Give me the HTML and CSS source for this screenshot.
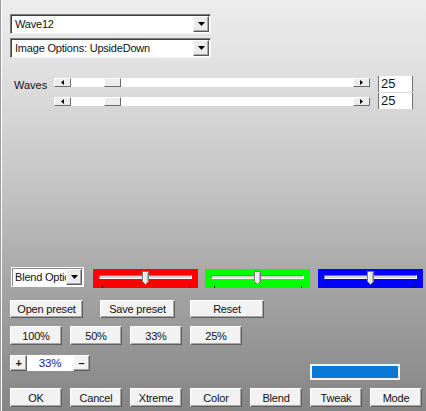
FILE: index.html
```html
<!DOCTYPE html>
<html>
<head>
<meta charset="utf-8">
<link rel="stylesheet" href="styles.css">
</head>
<body>
<div class="win">
  <div class="combo wide">
    <span class="val">Wave12</span>
    <span class="dd"><svg width="7" height="4" viewBox="0 0 7 4"><path d="M0 0H7L3.5 4Z" fill="#000"/></svg></span>
  </div>
  <div class="combo wide second">
    <span class="val">Image Options: UpsideDown</span>
    <span class="dd"><svg width="7" height="4" viewBox="0 0 7 4"><path d="M0 0H7L3.5 4Z" fill="#000"/></svg></span>
  </div>

  <div class="waves">
    <span class="lbl">Waves</span>
    <div class="sb first">
      <span class="arr"><svg width="3" height="5" viewBox="0 0 3 5"><path d="M3 0V5L0 2.5Z" fill="#000"/></svg></span>
      <span class="trk pre"></span>
      <span class="thumb"></span>
      <span class="trk rest"></span>
      <span class="arr"><svg width="3" height="5" viewBox="0 0 3 5"><path d="M0 0V5L3 2.5Z" fill="#000"/></svg></span>
    </div>
    <div class="edit">25</div>
    <span></span>
    <div class="sb second">
      <span class="arr"><svg width="3" height="5" viewBox="0 0 3 5"><path d="M3 0V5L0 2.5Z" fill="#000"/></svg></span>
      <span class="trk pre"></span>
      <span class="thumb"></span>
      <span class="trk rest"></span>
      <span class="arr"><svg width="3" height="5" viewBox="0 0 3 5"><path d="M0 0V5L3 2.5Z" fill="#000"/></svg></span>
    </div>
    <div class="edit">25</div>
  </div>

  <div class="fill"></div>

  <div class="colors">
    <div class="combo blend">
      <span class="val">Blend Options</span>
      <span class="dd"><svg width="7" height="4" viewBox="0 0 7 4"><path d="M0 0H7L3.5 4Z" fill="#000"/></svg></span>
    </div>
    <div class="chan red">
      <span class="groove"></span>
      <svg class="knob" width="8" height="14" viewBox="0 0 8 14"><path d="M0.5 0.5H6.5V10.5L3.5 13.5L0.5 10.5Z" fill="#e8e8e8" stroke="#7a7a7a"/><path d="M1.5 1.5V10.5" stroke="#fff"/><path d="M5.5 1.5V10.5" stroke="#b0b0b0"/></svg>
      <span class="tick t1"></span><span class="tick t2"></span>
    </div>
    <div class="chan green">
      <span class="groove"></span>
      <svg class="knob" width="8" height="14" viewBox="0 0 8 14"><path d="M0.5 0.5H6.5V10.5L3.5 13.5L0.5 10.5Z" fill="#e8e8e8" stroke="#7a7a7a"/><path d="M1.5 1.5V10.5" stroke="#fff"/><path d="M5.5 1.5V10.5" stroke="#b0b0b0"/></svg>
      <span class="tick t1"></span><span class="tick t2"></span>
    </div>
    <div class="chan blue">
      <span class="groove"></span>
      <svg class="knob" width="8" height="14" viewBox="0 0 8 14"><path d="M0.5 0.5H6.5V10.5L3.5 13.5L0.5 10.5Z" fill="#e8e8e8" stroke="#7a7a7a"/><path d="M1.5 1.5V10.5" stroke="#fff"/><path d="M5.5 1.5V10.5" stroke="#b0b0b0"/></svg>
      <span class="tick t1"></span><span class="tick t2"></span>
    </div>
  </div>

  <div class="row presets">
    <button class="btn w73">Open preset</button>
    <button class="btn w75">Save preset</button>
    <button class="btn w74">Reset</button>
  </div>

  <div class="row pct">
    <button class="btn">100%</button>
    <button class="btn">50%</button>
    <button class="btn">33%</button>
    <button class="btn">25%</button>
  </div>

  <div class="zoomrow">
    <button class="btn small">+</button>
    <span class="zval">33%</span>
    <button class="btn small">–</button>
    <span class="swatch"></span>
  </div>

  <div class="row bottom">
    <button class="btn">OK</button>
    <button class="btn">Cancel</button>
    <button class="btn">Xtreme</button>
    <button class="btn">Color</button>
    <button class="btn">Blend</button>
    <button class="btn">Tweak</button>
    <button class="btn">Mode</button>
  </div>
</div>
</body>
</html>
```

FILE: styles.css
```css
html, body {
  margin: 0;
  padding: 0;
}
body {
  width: 426px;
  height: 411px;
  overflow: hidden;
  background: linear-gradient(#ececec 0%, #e2e2e2 15%, #c4c4c4 45%, #a4a4a4 70%, #858585 100%);
  font-family: "Liberation Sans", Arial, sans-serif;
  font-size: 11px;
  letter-spacing: -0.2px;
  color: #111;
}
.win {
  height: 411px;
  box-sizing: border-box;
  border-left: 1px solid #9a9a9a;
  box-shadow: inset 1px 0 0 #ffffff;
  padding: 14px 0 4px 9px;
  display: flex;
  flex-direction: column;
}

/* combo boxes */
.combo {
  box-sizing: border-box;
  height: 20px;
  background: #fff;
  border: 1px solid;
  border-color: #7a7a7a #f4f4f4 #f4f4f4 #7a7a7a;
  box-shadow: inset 1px 1px 0 #404040;
  display: flex;
  align-items: center;
  padding: 1px 1px 1px 2px;
  flex: none;
}
.combo.wide { width: 201px; }
.combo.second { margin-top: 4px; }
.combo .val {
  flex: 1;
  min-width: 0;
  overflow: hidden;
  white-space: nowrap;
  padding-left: 2px;
  line-height: 16px;
  font-size: 11px;
}
.dd {
  box-sizing: border-box;
  width: 16px;
  height: 16px;
  flex: none;
  background: #ececec;
  border: 1px solid;
  border-color: #ffffff #5a5a5a #5a5a5a #ffffff;
  box-shadow: inset -1px -1px 0 #a8a8a8;
  display: flex;
  align-items: center;
  justify-content: center;
}

/* waves */
.waves {
  margin-top: 18px;
  display: grid;
  grid-template-columns: 36px 316px 35px;
  grid-template-rows: 17px 16px;
  column-gap: 8px;
}
.lbl {
  padding-left: 4px;
  line-height: 17px;
  margin-top: 1px;
  font-size: 11px;
  letter-spacing: 0;
}
.sb {
  height: 9px;
  display: flex;
  background: #fff;
}
.sb.first { margin-top: 2px; }
.sb.second { margin-top: 4px; }
.arr, .thumb {
  box-sizing: border-box;
  width: 17px;
  height: 9px;
  flex: none;
  background: #ececec;
  border: 1px solid;
  border-color: #ffffff #6a6a6a #6a6a6a #ffffff;
  display: flex;
  align-items: center;
  justify-content: center;
}
.trk { background: #fff; }
.trk.pre { width: 33px; flex: none; }
.trk.rest { flex: 1; }
.edit {
  box-sizing: border-box;
  background: #fff;
  border-left: 1px solid #707070;
  border-right: 1px solid #707070;
  padding-left: 2px;
  font-size: 13px;
  letter-spacing: 0;
  line-height: 15px;
  height: 16px;
}

.fill { flex: 1; }

/* colour channels */
.colors {
  display: flex;
  align-items: flex-start;
  height: 21px;
  flex: none;
}
.combo.blend {
  width: 73px;
  margin-right: 10px;
  margin-left: 1px;
  border-color: #ffffff #ffffff #ffffff #ffffff;
  box-shadow: inset 1px 1px 0 #8a8a8a;
}
.combo.blend .val { padding-left: 1px; }
.chan {
  position: relative;
  width: 105px;
  height: 19px;
  margin-top: 2px;
  flex: none;
}
.red { background: #ff0000; margin-left: -1px; }
.green { background: #00ff00; margin-left: 7px; }
.blue { background: #0000ff; margin-left: 8px; }
.groove {
  position: absolute;
  left: 6px;
  top: 6px;
  width: 93px;
  height: 4px;
  box-sizing: border-box;
  background: #d8d8d8;
  border: 1px solid;
  border-color: #7a7a7a #ffffff #ffffff #7a7a7a;
}
.knob {
  position: absolute;
  left: 49px;
  top: 2px;
}
.tick {
  position: absolute;
  top: 17px;
  width: 1px;
  height: 2px;
  background: #000;
}
.t1 { left: 9px; }
.t2 { left: 96px; }

/* buttons */
.row {
  display: flex;
  gap: 8px;
  flex: none;
}
.btn {
  box-sizing: border-box;
  width: 52px;
  height: 19px;
  margin: 0;
  padding: 0;
  font-family: "Liberation Sans", Arial, sans-serif;
  font-size: 11px;
  letter-spacing: -0.2px;
  color: #111;
  background: #f2f2f2;
  border: 1px solid;
  border-color: #ffffff #5e5e5e #5e5e5e #ffffff;
  box-shadow: inset -1px -1px 0 #a8a8a8;
  line-height: 16px;
  text-align: center;
  white-space: nowrap;
}
.presets { margin-top: 12px; }
.presets .btn { height: 18px; }
.presets .w73 { width: 73px; }
.presets .w75 { width: 75px; margin-left: 9px; }
.presets .w74 { width: 74px; margin-left: 7px; }
.pct { margin-top: 8px; }
.zoomrow {
  margin-top: 10px;
  height: 25px;
  display: flex;
  align-items: flex-start;
  flex: none;
}
.btn.small {
  width: 17px;
  height: 16px;
  font-weight: bold;
  line-height: 13px;
}
.zval {
  width: 46px;
  height: 16px;
  background: #fff;
  color: #1c1c8c;
  text-align: center;
  line-height: 16px;
  font-size: 11.5px;
}
.swatch {
  box-sizing: border-box;
  margin-left: 220px;
  margin-top: 9px;
  width: 90px;
  height: 16px;
  background: #0a78d6;
  border: 2px solid #f4f4f4;
}
.bottom { margin-top: 8px; }
```
